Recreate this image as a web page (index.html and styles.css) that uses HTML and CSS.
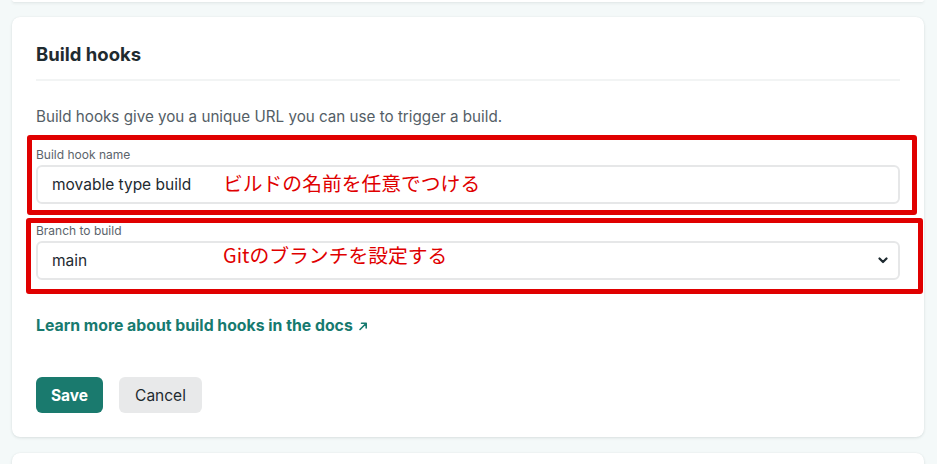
FILE: index.html
```html
<!DOCTYPE html>
<html lang="en">
<head>
<meta charset="utf-8">
<title>Build hooks</title>
<link rel="stylesheet" href="styles.css">
</head>
<body>
<div class="page">
  <div class="card card-prev"></div>
  <section class="card card-main">
    <h2 class="title">Build hooks</h2>
    <div class="divider"></div>
    <p class="desc">Build hooks give you a unique URL you can use to trigger a build.</p>

    <div class="field annot annot-name">
      <label class="label">Build hook name</label>
      <div class="input">movable type build</div>
      <span class="note note-name">ビルドの名前を任意でつける</span>
    </div>

    <div class="field annot annot-branch">
      <label class="label">Branch to build</label>
      <div class="input select">
        <span>main</span>
        <svg class="chev" width="10" height="7" viewBox="0 0 10 7"><polyline points="1.5,1.5 5,5 8.5,1.5" fill="none" stroke="#1e2a30" stroke-width="2.2" stroke-linecap="round" stroke-linejoin="round"/></svg>
      </div>
      <span class="note note-branch">Gitのブランチを設定する</span>
    </div>

    <a class="link" href="#">Learn more about build hooks in the docs <svg class="arrow" width="10" height="10" viewBox="0 0 10 10"><path d="M2 8.5 L8 2.5 M3.5 2.3 H8.2 V7" fill="none" stroke="#177a6f" stroke-width="1.6" stroke-linecap="round" stroke-linejoin="round"/></svg></a>

    <div class="actions">
      <button class="btn btn-primary">Save</button>
      <button class="btn btn-secondary">Cancel</button>
    </div>
  </section>
  <div class="card card-next"></div>
</div>
</body>
</html>
```

FILE: styles.css
```css
html, body {
  margin: 0;
  padding: 0;
}
body {
  background: #f4f9f9;
  font-family: Inter, "Liberation Sans", "Noto Sans CJK JP", sans-serif;
  color: #1e2a30;
  overflow: hidden;
}
.page {
  padding: 0 13px 0 12px;
}
.card {
  background: #ffffff;
  border-radius: 8px;
  box-shadow: 0 1px 3px rgba(30, 60, 60, 0.12), 0 0 1px rgba(30, 60, 60, 0.08);
}
.card-prev {
  height: 2px;
  border-radius: 0 0 8px 8px;
}
.card-main {
  margin-top: 15px;
  padding: 25px 24px 24px;
  height: 420px;
  box-sizing: border-box;
}
.card-next {
  margin-top: 16px;
  height: 30px;
}
.title {
  margin: 0;
  font-size: 18.5px;
  line-height: 24px;
  font-weight: 700;
  color: #1f2b30;
}
.divider {
  margin-top: 13px;
  height: 2px;
  background: #f2f4f4;
}
.desc {
  margin: 26px 0 8px;
  font-size: 15.2px;
  line-height: 20px;
  color: #545e66;
}
.field {
  position: relative;
  display: flex;
  flex-direction: column;
}
.annot {
  border: 5px solid #e00000;
  border-radius: 3px;
}
.annot-name {
  margin: 0 -17px 0 -9px;
  padding: 7px 12px 6px 4px;
}
.annot-branch {
  margin: 3px -23px 0 -10px;
  padding: 0 18px 9px 5px;
}
.label {
  font-size: 12px;
  line-height: 16px;
  color: #5b646b;
}
.input {
  margin-top: 2px;
  height: 39px;
  box-sizing: border-box;
  border: 2px solid #e6e7e8;
  border-radius: 6px;
  padding: 0 14px;
  display: flex;
  align-items: center;
  font-size: 15.5px;
  color: #1e2a30;
}
.select {
  justify-content: space-between;
  padding-right: 10px;
}
.chev {
  display: block;
}
.note {
  position: absolute;
  font-family: "Noto Sans CJK JP", sans-serif;
  font-size: 19.8px;
  line-height: 24px;
  color: #e00000;
  white-space: nowrap;
}
.note-name {
  left: 191px;
  top: 31px;
}
.note-branch {
  left: 192px;
  top: 20px;
}
.link {
  display: inline-flex;
  align-items: center;
  margin-top: 22px;
  font-size: 15.8px;
  line-height: 20px;
  font-weight: 700;
  color: #177a6f;
  text-decoration: none;
}
.arrow {
  margin-left: 5px;
  margin-top: -1px;
}
.actions {
  margin-top: 41px;
  display: flex;
  gap: 16px;
}
.btn {
  height: 36px;
  border: none;
  border-radius: 6px;
  font-family: Inter, "Liberation Sans", sans-serif;
  font-size: 15.5px;
  padding: 0;
}
.btn-primary {
  width: 67px;
  background: #1a7a6e;
  color: #ffffff;
  font-weight: 700;
}
.btn-secondary {
  width: 83px;
  background: #e8e9ea;
  color: #1e2a30;
  font-weight: 400;
}
```
